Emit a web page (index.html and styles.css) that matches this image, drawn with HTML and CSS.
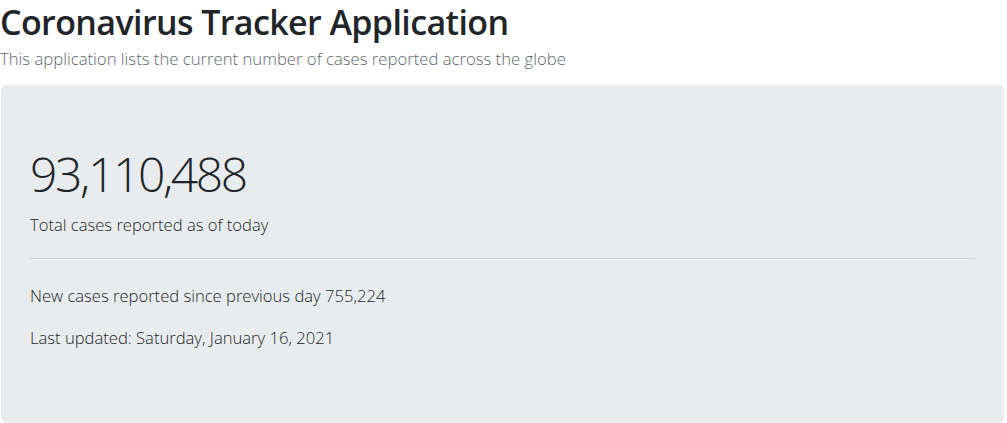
FILE: index.html
```html
<!DOCTYPE html>
<html lang="en">
<head>
<meta charset="utf-8">
<title>Coronavirus Tracker Application</title>
<link rel="stylesheet" href="styles.css">
</head>
<body>
<header class="header">
  <h1 class="title">Coronavirus Tracker Application</h1>
  <p class="subtitle">This application lists the current number of cases reported across the globe</p>
</header>
<main class="jumbotron">
  <div class="total">93,110,488</div>
  <p class="lead">Total cases reported as of today</p>
  <hr class="divider">
  <p class="info">New cases reported since previous day 755,224</p>
  <p class="info">Last updated: Saturday, January 16, 2021</p>
</main>
</body>
</html>
```
FILE: styles.css
```css
html, body {
  margin: 0;
  padding: 0;
  background: #fff;
}
body {
  font-family: "Open Sans", "Noto Sans", "Liberation Sans", sans-serif;
  color: #212529;
}
.header {
  padding-top: 2px;
}
.title {
  margin: 0;
  font-size: 34px;
  font-weight: 600;
  line-height: 40px;
  letter-spacing: -0.6px;
}
.subtitle {
  margin: 5px 0 0 0;
  font-size: 16.7px;
  font-weight: 300;
  line-height: 24px;
  color: #5f676e;
}
.jumbotron {
  margin: 14px 3px 0 1px;
  height: 338px;
  box-sizing: border-box;
  background: #e9ecef;
  border-radius: 5px;
  padding: 60px 29px 0 29px;
}
.total {
  font-size: 48px;
  font-weight: 300;
  line-height: 58px;
  letter-spacing: -2.4px;
}
.lead, .info {
  margin: 0;
  font-size: 16.6px;
  font-weight: 300;
  line-height: 24px;
}
.lead {
  margin-top: 10px;
}
.divider {
  margin: 21px 0 25px 0;
  border: 0;
  border-top: 1px solid rgba(0, 0, 0, 0.1);
}
.info {
  margin-bottom: 18px;
}
```
